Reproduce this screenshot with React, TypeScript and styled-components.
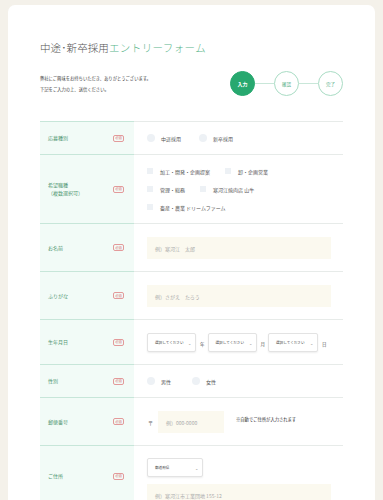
import styled, { createGlobalStyle } from "styled-components"

const GlobalStyle = createGlobalStyle`
	html, body {
		margin: 0;
		padding: 0;
		background: #f4f1ea;
	}
	body {
		padding: 5px 8px 0;
		font-family: "Noto Sans CJK JP", "Noto Sans", sans-serif;
		color: #444;
	}
`

const Card = styled.div`
	background: #fff;
	border-radius: 7px 7px 0 0;
	padding: 35px 32px 0;
	min-height: 495px;
	box-sizing: border-box;
`

const Title = styled.h1`
	margin: 0;
	font-size: 10.5px;
	line-height: 16px;
	font-weight: 300;
	letter-spacing: 0.1px;
	color: #555;

	span {
		color: #5cb68c;
		letter-spacing: 0.4px;
	}
`

const Head = styled.div`
	display: flex;
	align-items: center;
	justify-content: space-between;
	margin: 15px 0 25px;
`

const Intro = styled.div`
	font-size: 4.3px;
	line-height: 11px;
	color: #444;

	p {
		margin: 0;
	}
`

const Steps = styled.div`
	display: flex;
	align-items: center;
`

const Step = styled.div<{ $active?: boolean }>`
	width: 25px;
	height: 25px;
	border-radius: 50%;
	box-sizing: border-box;
	display: flex;
	align-items: center;
	justify-content: center;
	font-size: ${(p) => (p.$active ? "5px" : "4.5px")};
	font-weight: ${(p) => (p.$active ? 700 : 400)};
	background: ${(p) => (p.$active ? "#27a86f" : "#fff")};
	color: ${(p) => (p.$active ? "#fff" : "#4aaa7d")};
	border: 1px solid ${(p) => (p.$active ? "#27a86f" : "#a9dcc4")};
`

const Connector = styled.div`
	width: 19px;
	height: 1px;
	background: #c9e7d9;
`

const Table = styled.div`
	display: flex;
	flex-direction: column;
`

const Row = styled.div`
	display: grid;
	grid-template-columns: 94px 1fr;
`

const Label = styled.div`
	background: #f2fbf7;
	border-top: 1px solid #c7e6d9;
	display: flex;
	align-items: center;
	justify-content: space-between;
	padding: 0 10px 0 8px;
	font-size: 5px;
	line-height: 8px;
	color: #4f9670;
`

const Badge = styled.span`
	width: 11px;
	height: 7px;
	box-sizing: border-box;
	border: 1px solid #e39a9a;
	border-radius: 2px;
	font-size: 3.3px;
	line-height: 1;
	color: #d56c6c;
	display: flex;
	align-items: center;
	justify-content: center;
	flex-shrink: 0;
`

const Value = styled.div<{ $pad?: string }>`
	border-top: 1px solid #e7ebe9;
	padding: ${(p) => p.$pad || "13px 12px 12px 13px"};
	display: flex;
	flex-direction: column;
	justify-content: center;
	font-size: 5px;
	color: #555;
`

const Inline = styled.div<{ $h?: number }>`
	display: flex;
	align-items: center;
	height: ${(p) => p.$h ?? 18}px;
`

const Choice = styled.label<{ $gap?: number }>`
	display: flex;
	align-items: center;
	margin-right: ${(p) => p.$gap ?? 18}px;
	font-size: 5px;
	color: #555;
	white-space: nowrap;
`

const RadioDot = styled.span`
	width: 8px;
	height: 8px;
	border-radius: 50%;
	background: #edf1f5;
	margin-right: 6px;
`

const CheckBox = styled.span`
	width: 6px;
	height: 6px;
	background: #edf1f5;
	margin-right: 7px;
`

const TextInput = styled.div<{ $w?: number }>`
	width: ${(p) => (p.$w ? `${p.$w}px` : "184px")};
	height: 22px;
	box-sizing: border-box;
	background: #fbf9ef;
	padding-left: 8px;
	display: flex;
	align-items: center;
	font-size: 5px;
	color: #aaa;
	flex-shrink: 0;
`

const Select = styled.div<{ $w: number }>`
	width: ${(p) => p.$w}px;
	height: 19px;
	box-sizing: border-box;
	border: 1px solid #e3e3e3;
	border-radius: 2px;
	box-shadow: 0 1px 2px rgba(0, 0, 0, 0.07);
	background: #fff;
	display: flex;
	align-items: center;
	justify-content: space-between;
	padding: 0 4px 0 7px;
	font-size: 3.6px;
	color: #444;
	white-space: nowrap;
	flex-shrink: 0;
`

const Chevron = styled.span`
	font-size: 4px;
	color: #888;
`

const Unit = styled.span`
	font-size: 4.5px;
	color: #555;
	margin: 3px 3px 0 4px;
`

const Note = styled.span`
	font-size: 4.3px;
	color: #333;
	margin: -6px 0 0 12px;
	white-space: nowrap;
`

const Postal = styled.span`
	font-size: 5px;
	color: #666;
	margin: 0 5px 0 1px;
`

function Req() {
	return <Badge>必須</Badge>
}

export default function App() {
	return (
		<>
			<GlobalStyle />
			<Card>
				<Title>
					中途･新卒採用<span>エントリーフォーム</span>
				</Title>
				<Head>
					<Intro>
						<p>弊社にご興味をお持ちいただき、ありがとうございます。</p>
						<p>下記をご入力の上、送信ください。</p>
					</Intro>
					<Steps>
						<Step $active>入力</Step>
						<Connector />
						<Step>確認</Step>
						<Connector />
						<Step>完了</Step>
					</Steps>
				</Head>
				<Table>
					<Row>
						<Label>
							応募種別
							<Req />
						</Label>
						<Value $pad="7px 12px 7px 13px">
							<Inline>
								<Choice>
									<RadioDot />
									中途採用
								</Choice>
								<Choice>
									<RadioDot />
									新卒採用
								</Choice>
							</Inline>
						</Value>
					</Row>
					<Row>
						<Label>
							<span>
								希望職種
								<br />
								（複数選択可）
							</span>
							<Req />
						</Label>
						<Value $pad="7px 12px 7px 13px">
							<Inline>
								<Choice $gap={15}>
									<CheckBox />
									加工・開発・企画提案
								</Choice>
								<Choice $gap={15}>
									<CheckBox />
									卸・企画営業
								</Choice>
							</Inline>
							<Inline>
								<Choice $gap={15}>
									<CheckBox />
									管理・総務
								</Choice>
								<Choice $gap={15}>
									<CheckBox />
									寒河江焼肉店 山牛
								</Choice>
							</Inline>
							<Inline>
								<Choice $gap={15}>
									<CheckBox />
									畜産・農業 ドリームファーム
								</Choice>
							</Inline>
						</Value>
					</Row>
					<Row>
						<Label>
							お名前
							<Req />
						</Label>
						<Value>
							<TextInput>例）寒河江　太郎</TextInput>
						</Value>
					</Row>
					<Row>
						<Label>
							ふりがな
							<Req />
						</Label>
						<Value>
							<TextInput>例）さがえ　たろう</TextInput>
						</Value>
					</Row>
					<Row>
						<Label>
							生年月日
							<Req />
						</Label>
						<Value $pad="13px 12px 12px 13px">
							<Inline $h={19}>
								<Select $w={49}>
									選択してください<Chevron>⌄</Chevron>
								</Select>
								<Unit>年</Unit>
								<Select $w={49}>
									選択してください<Chevron>⌄</Chevron>
								</Select>
								<Unit>月</Unit>
								<Select $w={50}>
									選択してください<Chevron>⌄</Chevron>
								</Select>
								<Unit>日</Unit>
							</Inline>
						</Value>
					</Row>
					<Row>
						<Label>
							性別
							<Req />
						</Label>
						<Value $pad="7px 12px 7px 13px">
							<Inline>
								<Choice $gap={21}>
									<RadioDot />
									男性
								</Choice>
								<Choice>
									<RadioDot />
									女性
								</Choice>
							</Inline>
						</Value>
					</Row>
					<Row>
						<Label>
							郵便番号
							<Req />
						</Label>
						<Value>
							<Inline $h={22}>
								<Postal>〒</Postal>
								<TextInput $w={66}>例）000-0000</TextInput>
								<Note>※自動でご住所が入力されます</Note>
							</Inline>
						</Value>
					</Row>
					<Row>
						<Label>
							ご住所
							<Req />
						</Label>
						<Value $pad="12px 12px 0 13px">
							<Select $w={56}>
								都道府県<Chevron>⌄</Chevron>
							</Select>
							<div style={{ height: "7px" }} />
							<TextInput>例）寒河江市工業団地 155-12</TextInput>
						</Value>
					</Row>
				</Table>
			</Card>
		</>
	)
}
